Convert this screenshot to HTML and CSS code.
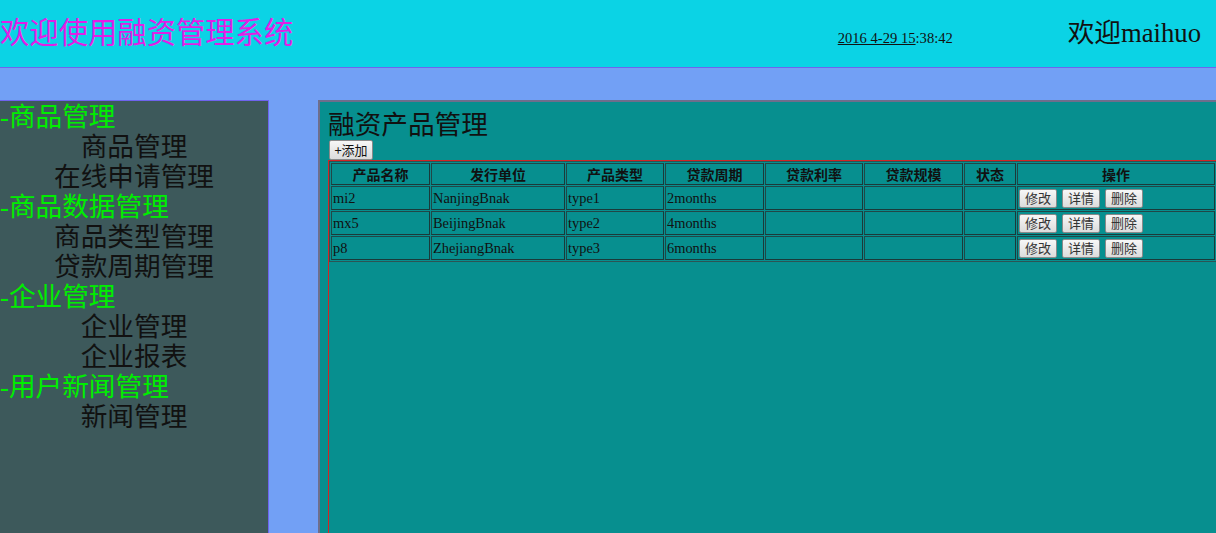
FILE: index.html
```html
<!DOCTYPE html>
<html lang="zh-CN">
<head>
<meta charset="utf-8">
<title>融资管理系统</title>
<link rel="stylesheet" href="styles.css">
</head>
<body>
<header class="top">
  <div class="brand">欢迎使用融资管理系统</div>
  <div class="clock"><span class="clock-link">2016 4-29 15</span>:38:42</div>
  <div class="welcome">欢迎maihuo</div>
</header>
<div class="main">
  <nav class="side">
    <div class="group">-商品管理</div>
    <div class="item">商品管理</div>
    <div class="item">在线申请管理</div>
    <div class="group">-商品数据管理</div>
    <div class="item">商品类型管理</div>
    <div class="item">贷款周期管理</div>
    <div class="group">-企业管理</div>
    <div class="item">企业管理</div>
    <div class="item">企业报表</div>
    <div class="group">-用户新闻管理</div>
    <div class="item">新闻管理</div>
  </nav>
  <section class="content">
    <h1 class="title">融资产品管理</h1>
    <div class="toolbar"><button class="btn">+添加</button></div>
    <div class="box">
      <table class="grid">
        <thead>
          <tr>
            <th class="c-name">产品名称</th>
            <th class="c-org">发行单位</th>
            <th class="c-type">产品类型</th>
            <th class="c-period">贷款周期</th>
            <th class="c-rate">贷款利率</th>
            <th class="c-scale">贷款规模</th>
            <th class="c-state">状态</th>
            <th class="c-ops">操作</th>
          </tr>
        </thead>
        <tbody>
          <tr>
            <td>mi2</td><td>NanjingBnak</td><td>type1</td><td>2months</td><td></td><td></td><td></td>
            <td><div class="ops"><button class="btn sm">修改</button><button class="btn sm">详情</button><button class="btn sm">删除</button></div></td>
          </tr>
          <tr>
            <td>mx5</td><td>BeijingBnak</td><td>type2</td><td>4months</td><td></td><td></td><td></td>
            <td><div class="ops"><button class="btn sm">修改</button><button class="btn sm">详情</button><button class="btn sm">删除</button></div></td>
          </tr>
          <tr>
            <td>p8</td><td>ZhejiangBnak</td><td>type3</td><td>6months</td><td></td><td></td><td></td>
            <td><div class="ops"><button class="btn sm">修改</button><button class="btn sm">详情</button><button class="btn sm">删除</button></div></td>
          </tr>
        </tbody>
      </table>
    </div>
  </section>
</div>
</body>
</html>
```

FILE: styles.css
```css
html, body {
  margin: 0;
  height: 100%;
  overflow: hidden;
}
body {
  font-family: "Liberation Serif", "Noto Sans CJK SC", serif;
  background: #72a0f5;
  color: #111;
}
.top {
  height: 67px;
  border-bottom: 1px solid #6e64ee;
  background: #0bd3e5;
  display: flex;
  align-items: center;
}
.brand {
  flex: 1;
  font-size: 29.33px;
  line-height: 1;
  color: #e21ee6;
  white-space: nowrap;
}
.clock {
  width: 230px;
  font-size: 14.6px;
  margin-top: 10px;
  white-space: nowrap;
}
.clock-link {
  text-decoration: underline;
}
.welcome {
  font-size: 26.67px;
  line-height: 1;
  padding-right: 15px;
  white-space: nowrap;
}
.main {
  display: flex;
  align-items: flex-start;
  padding-top: 32px;
}
.side {
  flex: none;
  width: 268px;
  height: 460px;
  background: #3d595b;
  border-top: 1px solid #6e64ee;
  border-right: 1px solid #6e64ee;
  font-size: 26.67px;
  line-height: 30px;
  padding-top: 1px;
}
.group {
  color: #00ee00;
  white-space: nowrap;
}
.item {
  text-align: center;
  color: #111;
  white-space: nowrap;
}
.content {
  flex: none;
  width: 920px;
  height: 460px;
  margin-left: 49px;
  background: #078f8f;
  border-top: 2px solid #6e6e8c;
  border-left: 2px solid #6e6e8c;
  padding: 8px 0 0 8px;
  display: flex;
  flex-direction: column;
  align-items: flex-start;
}
.title {
  margin: 0;
  font-size: 26.67px;
  font-weight: normal;
  line-height: 30px;
  color: #111;
  white-space: nowrap;
}
.toolbar {
  display: flex;
  height: 20px;
  padding-left: 1px;
}
.btn {
  font: 13px/16px "Noto Sans CJK SC", sans-serif;
  height: 20px;
  width: 44px;
  padding: 0;
  margin: 0;
  border: 1px solid #8a8a8a;
  border-radius: 2px;
  background: linear-gradient(#f7f7f7, #dcdcdc);
  color: #111;
  white-space: nowrap;
}
.btn.sm {
  height: 19px;
  width: 38px;
  color: #333;
}
.box {
  flex: 1;
  width: 888px;
  border: 1px solid #d42424;
}
.grid {
  width: 888px;
  table-layout: fixed;
  border: 1px solid #2c5454;
  border-spacing: 1px;
  font-size: 14.4px;
  color: #111;
}
.grid th, .grid td {
  box-sizing: border-box;
  border: 1px solid #214747;
  border-right-color: #1a3a3a;
  border-bottom-color: #1a3a3a;
  padding: 0 1px;
  white-space: nowrap;
  overflow: hidden;
}
.grid th {
  height: 21px;
  font-size: 14px;
  font-weight: bold;
  text-align: center;
}
.grid td {
  height: 24px;
  text-align: left;
}
.c-name { width: 99px; }
.c-org { width: 134px; }
.c-type { width: 98px; }
.c-period { width: 99px; }
.c-rate { width: 98px; }
.c-scale { width: 99px; }
.c-state { width: 52px; }
.c-ops { width: 198px; }
.ops {
  display: flex;
  gap: 5px;
}
```
